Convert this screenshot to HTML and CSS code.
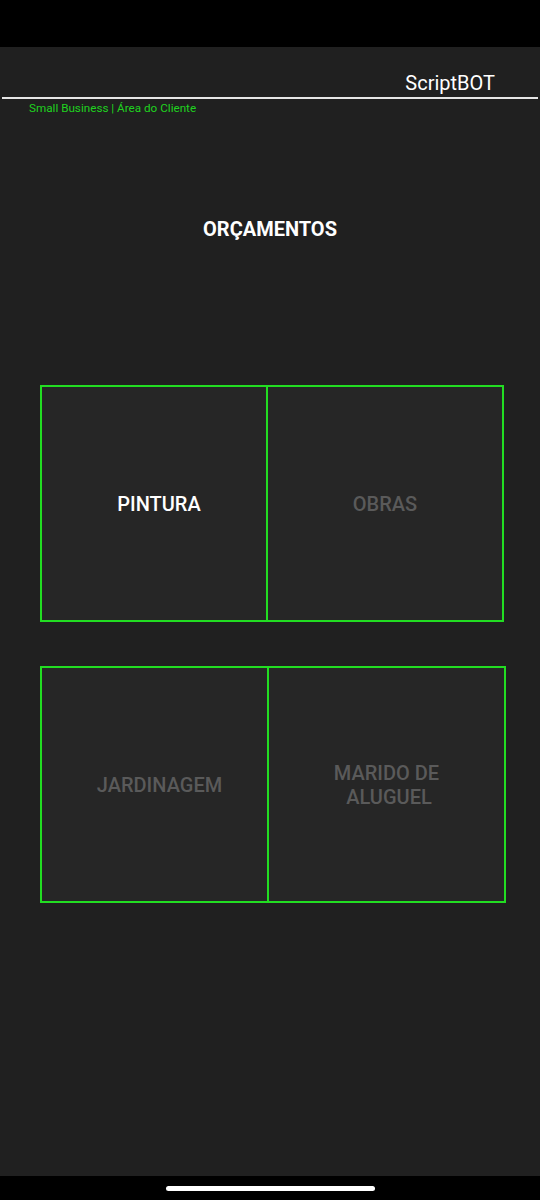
FILE: index.html
```html
<!DOCTYPE html>
<html lang="pt">
<head>
<meta charset="utf-8">
<title>ScriptBOT</title>
<link rel="stylesheet" href="styles.css">
</head>
<body>
<div class="screen">
  <div class="status-bar"></div>
  <main class="app">
    <header class="header">
      <div class="brand">ScriptBOT</div>
      <div class="rule"></div>
      <div class="subtitle">Small Business | Área do Cliente</div>
    </header>
    <h1 class="title">ORÇAMENTOS</h1>
    <section class="grid">
      <div class="row row-a">
        <div class="cell active">PINTURA</div>
        <div class="cell">OBRAS</div>
      </div>
      <div class="row row-b">
        <div class="cell">JARDINAGEM</div>
        <div class="cell">MARIDO DE<br>&nbsp;ALUGUEL</div>
      </div>
    </section>
  </main>
  <div class="nav-bar"><div class="pill"></div></div>
</div>
</body>
</html>
```
FILE: styles.css
```css
* { box-sizing: border-box; }
html, body { margin: 0; padding: 0; background: #000; }
body { font-family: Roboto, "Liberation Sans", sans-serif; }
.screen { width: 540px; height: 1200px; display: flex; flex-direction: column; overflow: hidden; }
.status-bar { height: 47px; background: #000; flex: none; }
.app { flex: 1; background: #202020; display: flex; flex-direction: column; }
.header { display: flex; flex-direction: column; }
.brand { align-self: flex-end; margin-right: 45px; margin-top: 24px; font-size: 20px; line-height: 24px; color: #fff; }
.rule { height: 2px; background: #e6e6e6; margin: 2px 2px 0; }
.subtitle { margin-left: 29px; margin-top: 2px; font-size: 11.7px; line-height: 14px; color: #1fd21f; }
.title { margin: 102px 0 0; text-align: center; font-size: 20px; line-height: 24px; font-weight: 700; color: #fff; }
.grid { margin-top: 144px; display: flex; flex-direction: column; gap: 44px; padding-left: 40px; }
.row { display: grid; height: 237px; border: 2px solid #22dd22; background: #262626; }
.row-a { width: 464px; grid-template-columns: 226px 1fr; }
.row-b { width: 466px; grid-template-columns: 227px 1fr; }
.cell { display: flex; align-items: center; justify-content: center; text-align: center; font-size: 20px; line-height: 24px; font-weight: 500; color: #5a5a5a; }
.cell:first-child { border-right: 2px solid #22dd22; padding-left: 10px; }
.cell.active { color: #fff; }
.nav-bar { height: 24px; background: #000; flex: none; display: flex; justify-content: center; padding-top: 10px; }
.pill { width: 209px; height: 5px; border-radius: 3px; background: #fff; }
```
